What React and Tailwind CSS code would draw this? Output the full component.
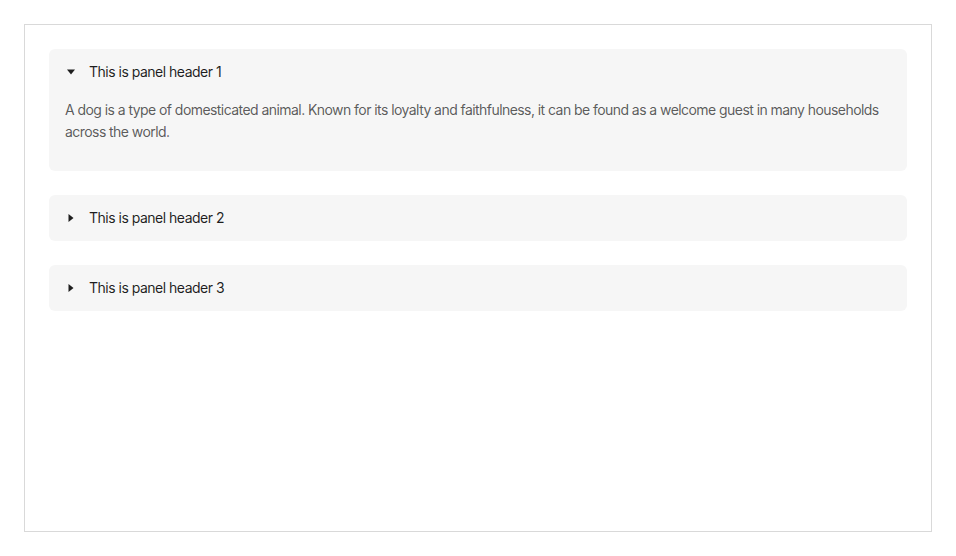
import React, { useState } from "react";

const panels = [
  { key: 1, title: "This is panel header 1" },
  { key: 2, title: "This is panel header 2" },
  { key: 3, title: "This is panel header 3" },
];

const text =
  "A dog is a type of domesticated animal. Known for its loyalty and faithfulness, it can be found as a welcome guest in many households across the world.";

function Caret({ open }) {
  return (
    <svg
      width="12"
      height="12"
      viewBox="0 0 12 12"
      className={open ? "rotate-90" : ""}
    >
      <path d="M3.5 2 L8.5 6 L3.5 10 Z" fill="rgba(0,0,0,0.88)" />
    </svg>
  );
}

export default function App() {
  const [open, setOpen] = useState([1]);
  const toggle = (k) =>
    setOpen((o) => (o.includes(k) ? o.filter((x) => x !== k) : [...o, k]));
  return (
    <div className="p-6 bg-white" style={{ fontFamily: "Inter, 'Noto Sans', sans-serif" }}>
      <div className="border border-[#d9d9d9] h-[508px] p-6 flex flex-col gap-6">
        {panels.map((p) => {
          const isOpen = open.includes(p.key);
          return (
            <div key={p.key} className="bg-[#f6f6f6] rounded-md">
              <div
                className="flex items-center px-4 py-3 cursor-pointer text-sm leading-[22px] tracking-[-0.5px] text-[rgba(0,0,0,0.88)]"
                onClick={() => toggle(p.key)}
              >
                <span className="mr-3 flex items-center">
                  <Caret open={isOpen} />
                </span>
                <span>{p.title}</span>
              </div>
              {isOpen && (
                <div className="px-4 pt-1 pb-4">
                  <p className="text-sm leading-[22px] tracking-[-0.56px] text-[rgba(0,0,0,0.65)] mb-3">{text}</p>
                </div>
              )}
            </div>
          );
        })}
      </div>
    </div>
  );
}
